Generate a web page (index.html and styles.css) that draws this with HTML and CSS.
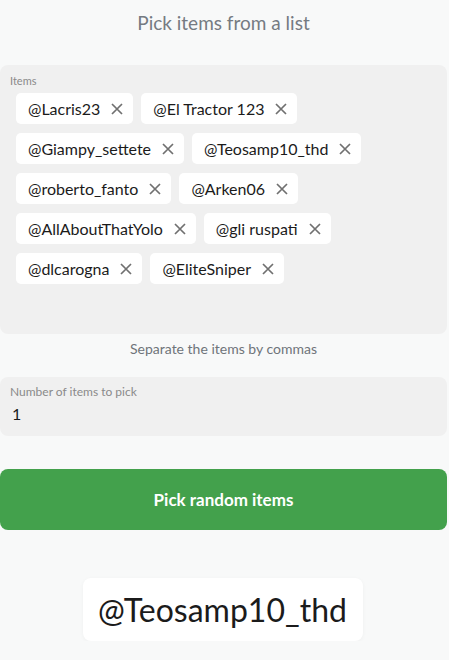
FILE: index.html
```html
<!DOCTYPE html>
<html>
<head>
<meta charset="utf-8">
<link rel="stylesheet" href="styles.css">
</head>
<body>
<main class="page">
  <h1 class="title">Pick items from a list</h1>
  <section class="field items-field">
    <div class="label">Items</div>
    <div class="chips">
      <span class="chip">@Lacris23<svg class="x" viewBox="0 0 12 12"><path d="M1 1L11 11M11 1L1 11"/></svg></span>
      <span class="chip">@El Tractor 123<svg class="x" viewBox="0 0 12 12"><path d="M1 1L11 11M11 1L1 11"/></svg></span>
      <span class="chip">@Giampy_settete<svg class="x" viewBox="0 0 12 12"><path d="M1 1L11 11M11 1L1 11"/></svg></span>
      <span class="chip">@Teosamp10_thd<svg class="x" viewBox="0 0 12 12"><path d="M1 1L11 11M11 1L1 11"/></svg></span>
      <span class="chip">@roberto_fanto<svg class="x" viewBox="0 0 12 12"><path d="M1 1L11 11M11 1L1 11"/></svg></span>
      <span class="chip">@Arken06<svg class="x" viewBox="0 0 12 12"><path d="M1 1L11 11M11 1L1 11"/></svg></span>
      <span class="chip">@AllAboutThatYolo<svg class="x" viewBox="0 0 12 12"><path d="M1 1L11 11M11 1L1 11"/></svg></span>
      <span class="chip">@gli ruspati<svg class="x" viewBox="0 0 12 12"><path d="M1 1L11 11M11 1L1 11"/></svg></span>
      <span class="chip">@dlcarogna<svg class="x" viewBox="0 0 12 12"><path d="M1 1L11 11M11 1L1 11"/></svg></span>
      <span class="chip">@EliteSniper<svg class="x" viewBox="0 0 12 12"><path d="M1 1L11 11M11 1L1 11"/></svg></span>
    </div>
  </section>
  <p class="hint">Separate the items by commas</p>
  <section class="field number-field">
    <div class="label">Number of items to pick</div>
    <div class="value">1</div>
  </section>
  <button class="pick">Pick random items</button>
  <div class="result-wrap">
    <div class="result">@Teosamp10_thd</div>
  </div>
</main>
</body>
</html>
```
FILE: styles.css
```css
html, body {
  margin: 0;
  padding: 0;
  background: #f8f9f9;
  font-family: "Lato", "Noto Sans", sans-serif;
  color: #1b1b1b;
}
.page {
  width: 447px;
  display: flex;
  flex-direction: column;
}
.title {
  margin: 0;
  height: 65px;
  padding-top: 11px;
  box-sizing: border-box;
  text-align: center;
  font-weight: 400;
  font-size: 19px;
  color: #757b82;
}
.field {
  background: #f0f0f0;
  border-radius: 8px;
  box-sizing: border-box;
}
.label {
  font-size: 11px;
  color: #8a8a8a;
  line-height: 14px;
}
.number-field .label {
  font-size: 12px;
}
.items-field {
  height: 269px;
  padding: 9px 10px 0 10px;
}
.chips {
  display: flex;
  flex-wrap: wrap;
  gap: 9px 8px;
  padding: 5px 6px 0 6px;
}
.chip {
  display: inline-flex;
  align-items: center;
  gap: 11px;
  height: 31px;
  padding: 0 10px 0 12px;
  background: #ffffff;
  border-radius: 5px;
  font-size: 16px;
  color: #1b1b1b;
}
.x {
  width: 12px;
  height: 12px;
  fill: none;
  stroke: #707070;
  stroke-width: 1.7;
}
.hint {
  margin: 0;
  height: 43px;
  padding-top: 6px;
  box-sizing: border-box;
  text-align: center;
  font-size: 14px;
  color: #6f7479;
}
.number-field {
  height: 59px;
  padding: 8px 10px 0 10px;
}
.value {
  margin-top: 5px;
  padding-left: 2px;
  font-size: 16px;
  color: #1b1b1b;
}
.pick {
  margin-top: 33px;
  height: 61px;
  border: none;
  border-radius: 8px;
  background: #43a14c;
  color: #ffffff;
  font-family: inherit;
  font-size: 17px;
  font-weight: 700;
}
.result-wrap {
  display: flex;
  justify-content: center;
  padding-top: 48px;
}
.result {
  width: 280px;
  height: 63px;
  margin-left: -2px;
  background: #ffffff;
  border-radius: 8px;
  display: flex;
  align-items: center;
  justify-content: center;
  font-size: 32px;
  color: #1b1b1b;
  box-shadow: 0 1px 4px rgba(0,0,0,0.04);
}
```
